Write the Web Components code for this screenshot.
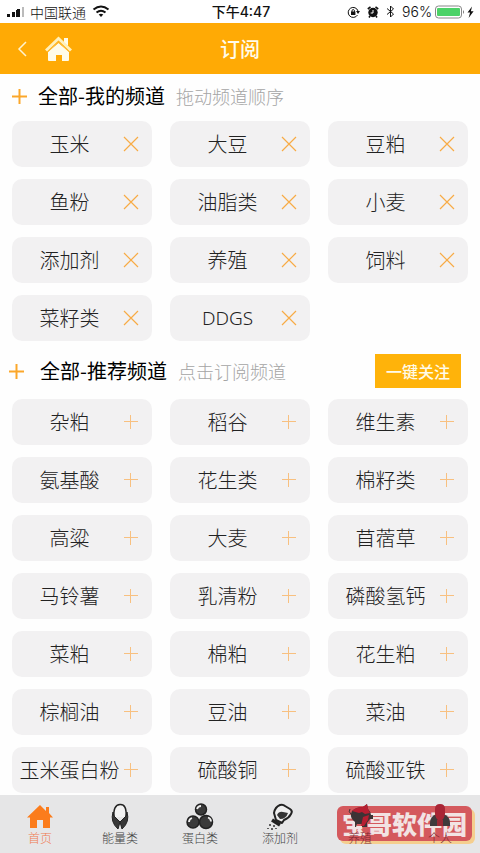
<!DOCTYPE html>
<html lang="zh-CN">
<head>
<meta charset="utf-8">
<meta name="viewport" content="width=device-width, initial-scale=1">
<title>订阅</title>
<style>
body{margin:0;background:#fefefe;color:#222;font-family:"Noto Sans CJK SC",sans-serif}
</style>
</head>
<body>
<channel-page></channel-page>
<script>
const define=(name,html)=>customElements.define(name,class extends HTMLElement{
  connectedCallback(){
    if(this.shadowRoot)return;
    const t=document.createElement('template');
    t.innerHTML=typeof html==='function'?html(this):html;
    this.attachShadow({mode:'open'}).append(t.content.cloneNode(true));
  }
});

define('status-bar',`<style>
:host{display:grid;grid-template-columns:1fr auto 1fr;align-items:center;height:23px;padding:0 5px 0 7px;background:#fff;color:#111;font-size:14px;line-height:22px}
div{display:flex;align-items:center}
.r{justify-content:flex-end;gap:7px}
.l{gap:5px;font-weight:300}
.t{font-family:Inter,"Noto Sans CJK SC",sans-serif;font-weight:500}
.p{display:flex;align-items:center;gap:3px;font-family:Inter,sans-serif;font-weight:300}
svg{display:block}
</style>
<div class="l"><svg width="18" height="10"><path d="M0 7h3v3H0zM5 5h3v5H5zM9 3h3v7H9z" fill="#111"/><path d="M10 2h3v8h-3z" fill="#111"/><path d="M15 0h2v10h-2z" fill="#bbb"/></svg><span>中国联通</span>
<svg width="20" height="13" viewBox="0 0 18 13" fill="none" stroke="#111" stroke-width="2"><path d="M1.500 4.500Q9-1.500 16.500 4.500M4.500 7.500Q9 4 13.500 7.500"/><path d="M9 12l-2.300-2.400Q9 8 11.300 9.600z" fill="#111" stroke="none"/></svg></div>
<div class="t">下午4:47</div>
<div class="r">
<svg width="13" height="12" viewBox="0 0 13 12"><path d="M10.500 9A5 5 0 1 1 11 5" fill="none" stroke="#111" stroke-width="1"/><path d="M9 5h4l-2 3z" fill="#111"/><path d="M4 5.500h4.400V9H4z" fill="#111"/><path d="M5 6V4.300q1.200-1.600 2.400 0V6" fill="none" stroke="#111"/></svg>
<svg width="12" height="12" viewBox="0 0 12 12"><circle cx="6" cy="6.500" r="4.700" fill="#111"/><path d="M.8 3L3.500.9M11.200 3L8.500.9M3 10l-1 1.500M9 10l1 1.500" stroke="#111" stroke-width="1.600"/><path d="M6 4v3H3.700" fill="none" stroke="#fff"/></svg>
<svg width="9" height="13" viewBox="0 0 9 13"><path d="M1 3.500l6.500 5.500L4.500 12V1l3 3L1 9.500" fill="none" stroke="#111"/></svg>
<div class="p">96%
<svg width="40" height="14" viewBox="0 0 40 14"><rect x=".5" y="1" width="26" height="12" rx="3" fill="#fff" stroke="#888"/><rect x="2" y="3" width="23" height="8" rx="1" fill="#4bd267"/><path d="M28 5q2 2 0 4" fill="#777"/><path d="M37 1.500l-4.500 6h2.600L33.600 13l5-6.800h-2.700z" fill="#111"/></svg></div>
</div>`);

define('nav-header',`<style>
:host{display:grid;grid-template-columns:1fr auto 1fr;align-items:center;height:51px;background:#ffaa05;color:#fffbea}
div{display:flex;align-items:center;gap:16px;padding-left:15px}
button{padding:0;border:0;background:none;display:block;cursor:pointer}
svg{display:block}
h1{margin:0;font-size:20px;line-height:28px;font-weight:500}
</style>
<div><button aria-label="返回"><svg width="14" height="18" fill="none" stroke="#fff3cf" stroke-width="1.500"><path d="M11 2L4 9l7 7"/></svg></button>
<button aria-label="首页"><svg width="27" height="26" viewBox="0 0 27 26"><path d="M19 2h4v8l-4-3z" fill="#fffbe9"/><path d="M3 16L13.500 7 24 16v8q0 1-1 1h-6v-6h-6v6H4q-1 0-1-1z" fill="#fffbe9"/><path d="M1 14.500L13.500 2.500 26 14.500" fill="none" stroke="#fff0bb" stroke-width="3"/><path d="M2.500 16L13.500 6 24.500 16" fill="none" stroke="#ffbe3c" stroke-width="1"/></svg></button></div>
<h1><slot></slot></h1>`);

define('section-title',`<style>
:host{display:flex;align-items:center;height:34px;padding:0 19px 0 11px}
svg{flex:none}
h2{margin:0 11px 0 10px;font-size:20px;line-height:28px;font-weight:400;color:#000}
span{font-size:18px;line-height:28px;font-weight:300;color:#a5a5a5;flex:1}
:host([wide]){padding-left:8px}
:host([wide]) h2{margin-left:15px}
</style>
<svg width="17" height="17"><path d="M8.500 1v15M1 8.500h15" stroke="#fba72b" stroke-width="2"/></svg>
<h2><slot></slot></h2><span><slot name="hint"></slot></span><slot name="action"></slot>`);

define('follow-all',`<style>
:host{display:block}
button{display:block;border:0;margin:0;padding:0 11px;height:34px;background:#ffb30a;color:#fffbe9;font:500 16px/34px "Noto Sans CJK SC",sans-serif;cursor:pointer}
</style><button><slot></slot></button>`);

define('channel-tile',el=>`<style>
:host{display:block;min-width:0}
button{display:flex;align-items:center;width:100%;height:46px;border:0;margin:0;border-radius:10px;background:#f2f1f2;padding:0 13px 0 4px;color:#222;font:300 20px/28px "Noto Sans CJK SC",sans-serif;white-space:nowrap;cursor:pointer}
span{flex:1;text-align:center}
:host([latin]) span{font-family:"Noto Sans",sans-serif;font-size:19px}
svg{flex:none}
</style><button><span><slot></slot></span>${el.hasAttribute('added')
?'<svg width="16" height="16"><path d="M1 1l14 14M15 1L1 15" stroke="#f8ab45" stroke-width="1.200"/></svg>'
:'<svg width="16" height="16"><path d="M7.500 1v14M1 7.500h14" stroke="#f8c080" stroke-width="1"/></svg>'}</button>`);

define('channel-grid',el=>`<style>
:host{display:grid;grid-template-columns:repeat(3,1fr);gap:12px 18px;padding:0 12px}
</style>${el.getAttribute('names').split(' ').map(n=>`<channel-tile ${el.hasAttribute('added')?'added':''} ${/^[A-Z]+$/.test(n)?'latin':''}>${n}</channel-tile>`).join('')}`);

const icons={
home:'<path d="M14 2L1 14.500h3V25h7v-8h6v8h7V14.500h3L23 10V4h-3v4z" fill="#fb7c1c"/>',
corn:'<path d="M8 14Q7 2 14 1.500T20 14" fill="#f2f2f2" stroke="#222" stroke-width="1.500"/><path d="M7 9Q4 19 12 26L14 19 8 13zM21 9q3 10-5 17l-2-7 6-6z" fill="#383838" stroke="#222" stroke-linejoin="round"/>',
protein:'<g fill="#3a3a3a" stroke="#222" stroke-width="1.500"><circle cx="15" cy="6.500" r="5.500"/><circle cx="7" cy="19" r="6"/><circle cx="20" cy="19" r="6.500"/></g><path d="M11 6q1-3 4-3M3 19q0-3 3-4M22 14.500q3 1 3 4" fill="none" stroke="#eee" stroke-width="1.800"/>',
additive:'<path d="M10 17L8 10q1-6 6-8 3-1 5 1l5 3q3 2 1 5-2 4-7 6l-2 3z" fill="#eee" stroke="#222" stroke-width="2" stroke-linejoin="round"/><path d="M11 12q2-4 6-3l5 1q-2 6-8 6z" fill="#333"/><path d="M6 17l8 5" stroke="#222" stroke-width="3.500"/><path d="M4 21v2M8 22v2M2 25v1M6 25v2M10 25v1" stroke="#333" stroke-width="1.500"/>',
pig:'<path d="M6 8q4-4 11-4l4-3 1 5q3 3 3 6h2v4h-3l-3 4v4h-5v-3h-5l-1 3H9v-5q-5-4-4-8z" fill="#3d3335"/><path d="M6 8q4-4 11-4l4-3 1 5 2 4-5 1-3-2-3 1zM17 14l6-2-1 5-4 6h-3z" fill="#b71e31"/><path d="M4 6q-2 3 1 5" fill="none" stroke="#3d3335"/>',
person:'<path d="M4 23v-3q0-7 7-9h6q7 2 7 9v3z" fill="#403a3c"/><path d="M9 6q0-5 5-5t5 5v5q-1 6-5 7-4-1-5-7z" fill="#a92535"/><path d="M11 17h6v6h-6z" fill="#9b2835"/>'
};
define('tab-item',el=>`<style>
:host{display:block;flex:1;min-width:0}
a{display:flex;flex-direction:column;align-items:center;color:#444;text-decoration:none;font-size:12px;line-height:16px;font-weight:300;padding-top:8px}
:host([active]) a{color:#f07a50}
:host([marked]) a{color:#7e2630}
svg{display:block}
</style><a href="#"><svg width="28" height="27" viewBox="0 0 28 27">${icons[el.getAttribute('icon')]}</svg><slot></slot></a>`);

define('site-stamp',`<style>
:host{display:block;box-sizing:border-box;border-radius:6px;background:#d4595d;box-shadow:3px 3px 0 #f5ce8e;padding:0 5px;color:#f2e3e3;font-size:25px;line-height:35px;font-weight:900;white-space:nowrap}
</style><slot></slot>`);

define('tab-bar',`<style>
:host{display:block;position:relative;background:#e6e6e7;height:58px}
nav{display:flex;position:relative}
site-stamp{position:absolute;right:8px;top:11px}
</style><site-stamp>宝哥软件园</site-stamp>
<nav><tab-item icon="home" active>首页</tab-item><tab-item icon="corn">能量类</tab-item><tab-item icon="protein">蛋白类</tab-item><tab-item icon="additive">添加剂</tab-item><tab-item icon="pig" marked>养殖</tab-item><tab-item icon="person" marked>个人</tab-item></nav>`);

define('channel-page',`<style>
:host{display:flex;flex-direction:column;min-height:100vh}
main{display:flex;flex-direction:column;padding:5px 0 2px}
channel-grid{margin:8px 0 13px}
channel-grid:last-child{margin:11px 0 0}
tab-bar{margin-top:auto}
</style>
<status-bar></status-bar><nav-header>订阅</nav-header>
<main>
<section-title>全部-我的频道<span slot="hint">拖动频道顺序</span></section-title>
<channel-grid added names="玉米 大豆 豆粕 鱼粉 油脂类 小麦 添加剂 养殖 饲料 菜籽类 DDGS"></channel-grid>
<section-title wide>全部-推荐频道<span slot="hint">点击订阅频道</span><follow-all slot="action">一键关注</follow-all></section-title>
<channel-grid names="杂粕 稻谷 维生素 氨基酸 花生类 棉籽类 高粱 大麦 苜蓿草 马铃薯 乳清粉 磷酸氢钙 菜粕 棉粕 花生粕 棕榈油 豆油 菜油 玉米蛋白粉 硫酸铜 硫酸亚铁"></channel-grid>
</main>
<tab-bar></tab-bar>`);
</script>
</body>
</html>
